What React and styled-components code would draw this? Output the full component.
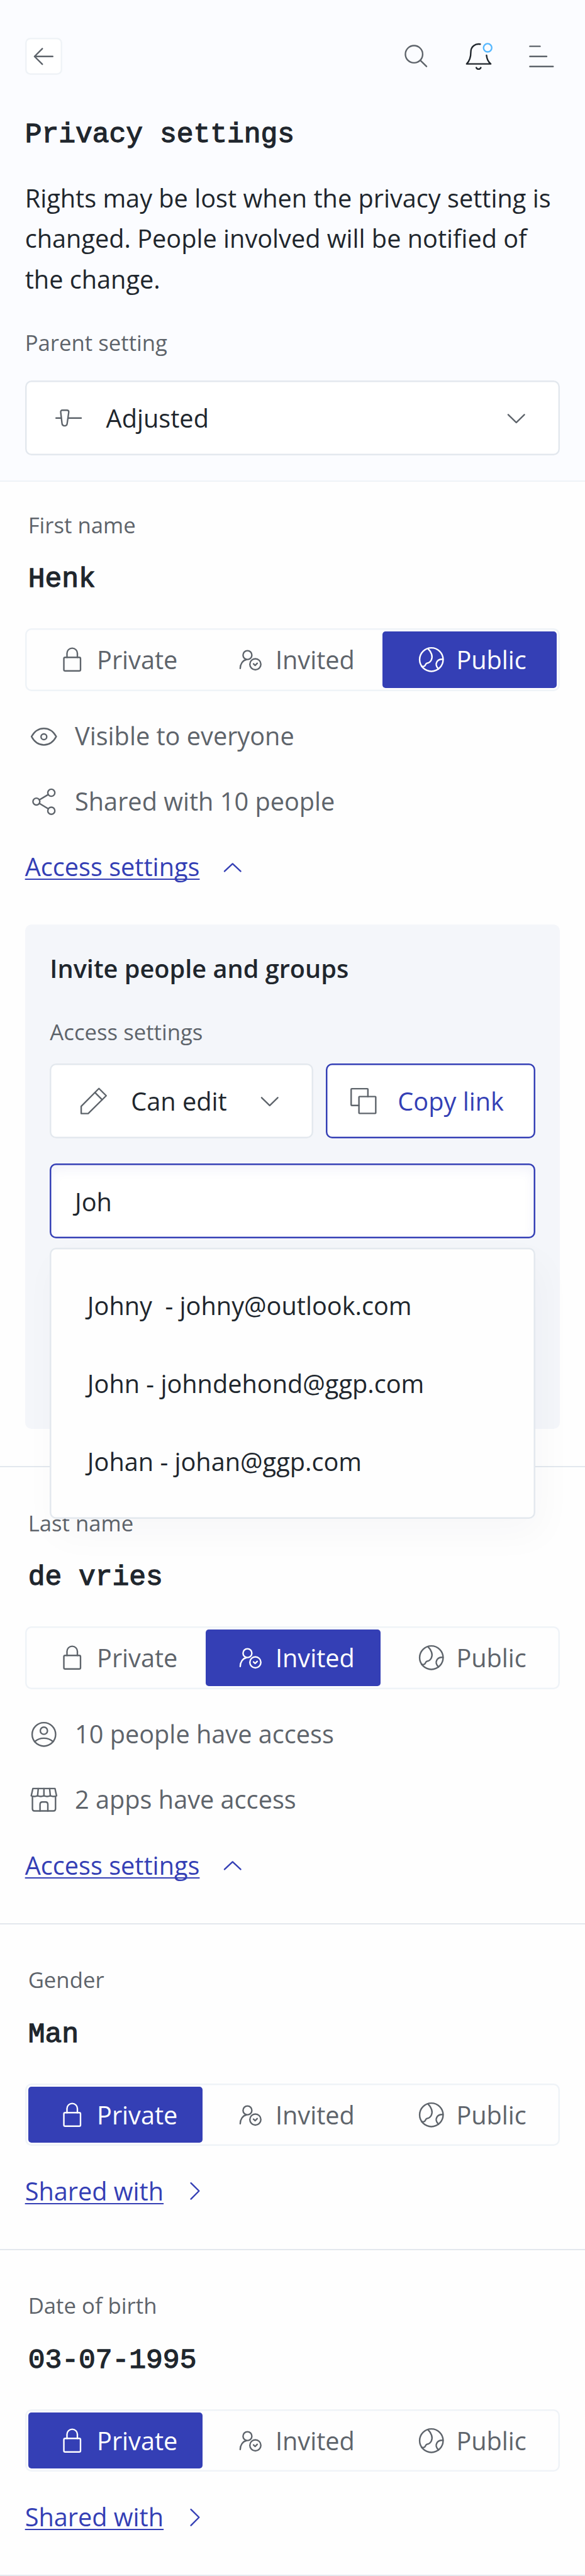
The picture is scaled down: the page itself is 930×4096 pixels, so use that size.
import React from 'react';
import styled, { createGlobalStyle, css } from 'styled-components';

/* All sizes are given on a 1125-unit wide artboard and scaled to the 930px page. */
const u = (n) => `${Math.round(n * (930 / 1125) * 1000) / 1000}px`;

const color = {
  ink: '#20262d',
  muted: '#5e646b',
  primary: '#343fb5',
  page: '#fefefe',
  header: '#fbfcff',
  panel: '#f4f6fa',
  line: '#e3e8ee',
  lineSoft: '#eff3f7',
  badge: '#56b8ff',
};

const GlobalStyle = createGlobalStyle`
  * { box-sizing: border-box; }
  html, body { margin: 0; padding: 0; background: ${color.page}; }
  body {
    font-family: 'Open Sans', 'Noto Sans', sans-serif;
    color: ${color.ink};
    overflow: hidden;
  }
  button, input { font: inherit; margin: 0; }
`;

const Page = styled.main`
  width: 930px;
  height: 4096px;
  overflow: hidden;
  display: flex;
  flex-direction: column;
`;

/* ---------- icons ---------- */

const Svg = styled.svg`
  width: ${u(72)};
  height: ${u(72)};
  flex: none;
  display: block;
  fill: none;
  stroke: currentColor;
  stroke-width: 2.9;
  stroke-linecap: round;
  stroke-linejoin: round;
`;

const Icon = ({ children }) => (
  <Svg viewBox="0 0 72 72" aria-hidden="true">{children}</Svg>
);

const ArrowLeftIcon = () => (
  <Icon><path d="M53 36H18M33 21 18 36l15 15" /></Icon>
);
const SearchIcon = () => (
  <Icon><circle cx="31.7" cy="31.7" r="16.6" /><path d="M44 43.6 55.7 55.3" /></Icon>
);
const BellIcon = () => (
  <Icon>
    <path d="M38 12.4C28.5 10.8 20 17 20 27C20 38 18 44.5 11.9 50.3H58.3C53.5 46.5 50.8 41 50.1 33.7" />
    <path d="M30.4 57.5C31.8 61.3 37.8 61.3 39.2 57.5" />
    <circle cx="52.3" cy="19.3" r="7.9" stroke={color.badge} />
  </Icon>
);
const MenuIcon = () => (
  <Icon><path d="M13.8 16.5H33.3M13.8 36H46M13.8 55.4H58.4" /></Icon>
);
const SliderIcon = () => (
  <Icon>
    <path d="M12.3 36H21.8M36 36H60.5" />
    <path d="M24.5 20.8H33C35.8 20.8 37 22.4 36.6 25L33.6 46.5C32.9 52.4 24.4 52.4 23.7 46.5L21.2 25C20.9 22.4 22 20.8 24.5 20.8Z" />
  </Icon>
);
const ChevronDownIcon = () => (
  <Icon><path d="M20.5 29.5 36 44.5 51.5 29.5" /></Icon>
);
const ChevronUpIcon = () => (
  <Icon><path d="M20.5 44 36 29.5 51.5 44" /></Icon>
);
const ChevronRightIcon = () => (
  <Icon><path d="M28.5 20.8 44 36 28.5 51.5" /></Icon>
);
const LockIcon = () => (
  <Icon>
    <rect x="20" y="31.8" width="32" height="26" rx="2.5" />
    <path d="M26 31.8V24a10 10 0 0 1 20 0V31.8" />
  </Icon>
);
const InvitedIcon = () => (
  <Icon>
    <circle cx="29.5" cy="27.4" r="8.5" />
    <path d="M15.6 53C15.6 44.5 20.5 37.5 27.5 36" />
    <circle cx="44.7" cy="45" r="10.6" />
    <path d="M41.2 44.3 44.4 47.2 48.3 43.2" />
  </Icon>
);
const GlobeIcon = () => (
  <Icon>
    <circle cx="36" cy="36" r="22.6" />
    <path d="M29.4 15C36.5 21.5 39 30.5 36 36.5C33.8 41 31.5 42.3 27.5 43C24 44 25 49 21.3 49.2L17.6 49.2" />
    <path d="M58.4 35.6C47.5 34.3 40.5 44.5 49.6 54" />
  </Icon>
);
const EyeIcon = () => (
  <Icon>
    <path d="M12.2 36.5C17.5 27 26 20.8 36 20.8S54.5 27 59.8 36.5C54.5 46.5 46 52.6 36 52.6S17.5 46.5 12.2 36.5Z" />
    <circle cx="36" cy="36.9" r="5.5" />
  </Icon>
);
const ShareIcon = () => (
  <Icon>
    <circle cx="21.6" cy="35.8" r="6.6" />
    <circle cx="50.3" cy="18.8" r="6.8" />
    <circle cx="50.3" cy="53.4" r="6.8" />
    <path d="M27.4 32.4 44.4 22.2M27.4 39.3 44.4 49.7" />
  </Icon>
);
const PersonIcon = () => (
  <Icon>
    <circle cx="36" cy="36" r="22.6" />
    <circle cx="36" cy="29" r="6.9" />
    <path d="M18.3 50C28 41.2 44 41.2 53.7 50" />
  </Icon>
);
const StoreIcon = () => (
  <Icon>
    <path d="M14.8 14.4H57.4L60.4 28.3Q54.6 30.8 48.4 28.3Q42.3 30.8 36.1 28.3Q30 30.8 23.9 28.3Q17.7 30.8 11.7 28.3Z" />
    <path d="M25.2 14.4 23.9 28.3M36.1 14.4V28.3M47 14.4 48.4 28.3" />
    <path d="M14 29.8V53.2Q14 57.4 18 57.4H54.3Q58.4 57.4 58.4 53.2V29.8" />
    <path d="M28.6 57.4V45Q28.6 40.2 33 40.2H39.2Q43.6 40.2 43.6 45V57.4" />
  </Icon>
);
const PencilIcon = () => (
  <Icon>
    <path d="M46.3 11.8 60.3 25.7 25.6 60H12.2V46.2Z" />
    <path d="M38.6 19.6 52.5 33.5" />
  </Icon>
);
const CopyIcon = () => (
  <Icon>
    <path d="M44.6 27.4V13.4Q44.6 12.2 43.4 12.2H13.6Q12.4 12.2 12.4 13.4V43.2Q12.4 44.4 13.6 44.4H27.4" />
    <rect x="27.4" y="27.4" width="32.3" height="32.3" rx="1" />
  </Icon>
);

/* ---------- shared styles ---------- */

/* A regular weight thickened slightly, for a medium-weight monospace. */
const monoText = css`
  font-family: 'Liberation Mono', 'DejaVu Sans Mono', monospace;
  font-weight: 400;
  -webkit-text-stroke: 1.3px currentColor;
  font-size: ${u(54)};
  line-height: ${u(78)};
`;

/* Inner outline that keeps its fractional width. */
const outline = (c) => `inset 0 0 0 ${u(3)} ${c}`;

const Label = styled.div`
  font-size: ${u(42)};
  line-height: ${u(63)};
  color: ${color.muted};
`;

const Divider = styled.div`
  flex: none;
  height: ${u(3)};
  background: ${({ $soft }) => ($soft ? color.lineSoft : color.line)};
`;

/* ---------- header ---------- */

const Header = styled.header`
  background: ${color.header};
  padding: ${u(72)} ${u(48)} ${u(48)};
`;

const Toolbar = styled.div`
  display: flex;
  align-items: center;
  justify-content: space-between;
  height: ${u(72)};
  color: ${color.muted};
`;

const BackButton = styled.button`
  display: flex;
  align-items: center;
  justify-content: center;
  width: ${u(72)};
  height: ${u(72)};
  padding: 0;
  color: inherit;
  background: #fff;
  border: 0;
  box-shadow: ${outline(color.lineSoft)};
  border-radius: ${u(10)};
`;

const ToolbarActions = styled.div`
  display: flex;
  gap: ${u(48)};
`;

const Bell = styled.span`
  color: ${color.ink};
`;

const Title = styled.h1`
  ${monoText}
  margin: ${u(76)} 0 0;
`;

const Intro = styled.p`
  margin: ${u(44)} 0 ${u(51.6)};
  font-size: ${u(48)};
  line-height: ${u(78)};
`;

const Select = styled.button`
  display: flex;
  align-items: center;
  width: ${({ $width }) => ($width ? u($width) : '100%')};
  height: ${u(144)};
  padding: 0 ${u(48)};
  font-size: ${u(48)};
  color: ${color.ink};
  background: #fff;
  border: 0;
  box-shadow: ${outline(color.line)};
  border-radius: ${u(12)};

  svg { color: ${color.muted}; }
`;

const SelectValue = styled.span`
  flex: 1;
  text-align: left;
  margin-left: ${u(36)};
  white-space: nowrap;
`;

const ParentSetting = styled.div`
  display: flex;
  flex-direction: column;
  gap: ${u(41.4)};
`;

/* ---------- sections ---------- */

const Section = styled.section`
  flex: none;
  padding: ${({ $first }) => u($first ? 51.2 : 75.2)} ${u(48)} ${u(72)};
`;

const FieldName = styled(Label)`
  padding-left: ${u(6)};
`;

const FieldValue = styled.div`
  ${monoText}
  margin-top: ${u(34.6)};
  padding-left: ${u(6)};
`;

const Segments = styled.div`
  display: flex;
  width: 100%;
  height: ${u(120)};
  margin-top: ${u(55.2)};
  padding: ${u(6)};
  box-shadow: ${outline(color.lineSoft)};
  border-radius: ${u(12)};
`;

const Segment = styled.button`
  display: flex;
  align-items: center;
  justify-content: center;
  gap: ${u(12)};
  width: ${u(336)};
  height: 100%;
  padding: 0;
  border: 0;
  border-radius: ${u(6)};
  font-size: ${u(48)};
  color: ${({ $active }) => ($active ? '#fff' : color.muted)};
  background: ${({ $active }) => ($active ? color.primary : 'transparent')};

  &:nth-child(2) { margin: 0 ${u(3)} 0 ${u(6)}; }
`;

const Rows = styled.div`
  display: flex;
  flex-direction: column;
  gap: ${u(48)};
  margin-top: ${u(48)};
`;

const InfoRow = styled.div`
  display: flex;
  align-items: center;
  gap: ${u(24)};
  height: ${u(78)};
  font-size: ${u(48)};
  line-height: ${u(78)};
  color: ${color.muted};
`;

const LinkRow = styled(InfoRow)`
  gap: ${({ $gap }) => u($gap)};
  color: ${color.primary};
`;

const Link = styled.a`
  text-decoration: underline;
  text-decoration-thickness: ${u(2.6)};
  text-decoration-skip-ink: none;
  text-underline-offset: ${u(4.4)};
`;

/* ---------- invite panel ---------- */

const InvitePanel = styled.div`
  height: ${u(969)};
  margin-top: ${u(72)};
  padding: ${u(49)} ${u(48)} ${u(48)};
  background: ${color.panel};
  border-radius: ${u(12)};
`;

const InviteTitle = styled.h2`
  margin: 0 0 ${u(54)};
  font-size: ${u(48)};
  font-weight: 600;
  line-height: ${u(72)};
`;

const InviteActions = styled.div`
  display: flex;
  gap: ${u(24)};
  margin: ${u(29)} 0 ${u(48)};
`;

const CopyButton = styled.button`
  display: flex;
  align-items: center;
  gap: ${u(30)};
  width: ${u(402)};
  height: ${u(144)};
  padding: 0 ${u(36)};
  font-size: ${u(48)};
  white-space: nowrap;
  color: ${color.primary};
  background: #fff;
  border: 0;
  box-shadow: ${outline(color.primary)};
  border-radius: ${u(12)};

  svg { color: ${color.muted}; }
`;

const Combobox = styled.div`
  position: relative;
`;

const SearchField = styled.div`
  display: flex;
  align-items: center;
  height: ${u(144)};
  padding: ${u(4)} ${u(48)} 0;
  font-size: ${u(48)};
  background: #fff;
  border-radius: ${u(12)};
  box-shadow: ${outline(color.primary)}, inset 0 ${u(9)} ${u(24)} rgba(52, 63, 181, 0.08);
`;

const Suggestions = styled.ul`
  position: absolute;
  z-index: 2;
  top: calc(100% + ${u(18)});
  left: 0;
  right: 0;
  height: ${u(522)};
  margin: 0;
  padding: ${u(36)} 0 0 ${u(72)};
  list-style: none;
  background: ${color.page};
  border-radius: ${u(12)};
  box-shadow: ${outline(color.line)}, ${u(12)} ${u(30)} ${u(72)} rgba(25, 28, 60, 0.03);
`;

const Suggestion = styled.li`
  height: ${u(150)};
  font-size: ${u(48)};
  line-height: ${u(150)};
  white-space: pre;
`;

/* ---------- composition ---------- */

const LEVELS = [
  { name: 'Private', Glyph: LockIcon },
  { name: 'Invited', Glyph: InvitedIcon },
  { name: 'Public', Glyph: GlobeIcon },
];

const PrivacySwitch = ({ value }) => (
  <Segments>
    {LEVELS.map(({ name, Glyph }) => (
      <Segment key={name} type="button" $active={name === value}>
        <Glyph />
        {name}
      </Segment>
    ))}
  </Segments>
);

const Field = ({ first, label, value, level, info = [], children }) => (
  <Section $first={first}>
    <FieldName>{label}</FieldName>
    <FieldValue>{value}</FieldValue>
    <PrivacySwitch value={level} />
    <Rows>
      {info.map(({ text, Glyph }) => (
        <InfoRow key={text}>
          <Glyph />
          {text}
        </InfoRow>
      ))}
      {info.length > 0 ? (
        <LinkRow $gap={27}>
          <Link>Access settings</Link>
          <ChevronUpIcon />
        </LinkRow>
      ) : (
        <LinkRow $gap={24}>
          <Link>Shared with</Link>
          <ChevronRightIcon />
        </LinkRow>
      )}
    </Rows>
    {children}
  </Section>
);

const SUGGESTIONS = [
  'Johny  - johny@outlook.com',
  'John - johndehond@ggp.com',
  'Johan - johan@ggp.com',
];

export default function App() {
  return (
    <>
      <GlobalStyle />
      <Page>
        <Header>
          <Toolbar>
            <BackButton type="button" aria-label="Back"><ArrowLeftIcon /></BackButton>
            <ToolbarActions>
              <SearchIcon />
              <Bell><BellIcon /></Bell>
              <MenuIcon />
            </ToolbarActions>
          </Toolbar>
          <Title>Privacy settings</Title>
          <Intro>
            Rights may be lost when the privacy setting is changed. People involved will be
            notified of the change.
          </Intro>
          <ParentSetting>
            <Label>Parent setting</Label>
            <Select type="button">
              <SliderIcon />
              <SelectValue>Adjusted</SelectValue>
              <ChevronDownIcon />
            </Select>
          </ParentSetting>
        </Header>
        <Divider $soft />

        <Field
          first
          label="First name"
          value="Henk"
          level="Public"
          info={[
            { text: 'Visible to everyone', Glyph: EyeIcon },
            { text: 'Shared with 10 people', Glyph: ShareIcon },
          ]}
        >
          <InvitePanel>
            <InviteTitle>Invite people and groups</InviteTitle>
            <Label>Access settings</Label>
            <InviteActions>
              <Select type="button" $width={507}>
                <PencilIcon />
                <SelectValue>Can edit</SelectValue>
                <ChevronDownIcon />
              </Select>
              <CopyButton type="button">
                <CopyIcon />
                Copy link
              </CopyButton>
            </InviteActions>
            <Combobox>
              <SearchField>Joh</SearchField>
              <Suggestions>
                {SUGGESTIONS.map((entry) => (
                  <Suggestion key={entry}>{entry}</Suggestion>
                ))}
              </Suggestions>
            </Combobox>
          </InvitePanel>
        </Field>
        <Divider />

        <Field
          label="Last name"
          value="de vries"
          level="Invited"
          info={[
            { text: '10 people have access', Glyph: PersonIcon },
            { text: '2 apps have access', Glyph: StoreIcon },
          ]}
        />
        <Divider />

        <Field label="Gender" value="Man" level="Private" />
        <Divider />

        <Field label="Date of birth" value="03-07-1995" level="Private" />
        <Divider />
      </Page>
    </>
  );
}
